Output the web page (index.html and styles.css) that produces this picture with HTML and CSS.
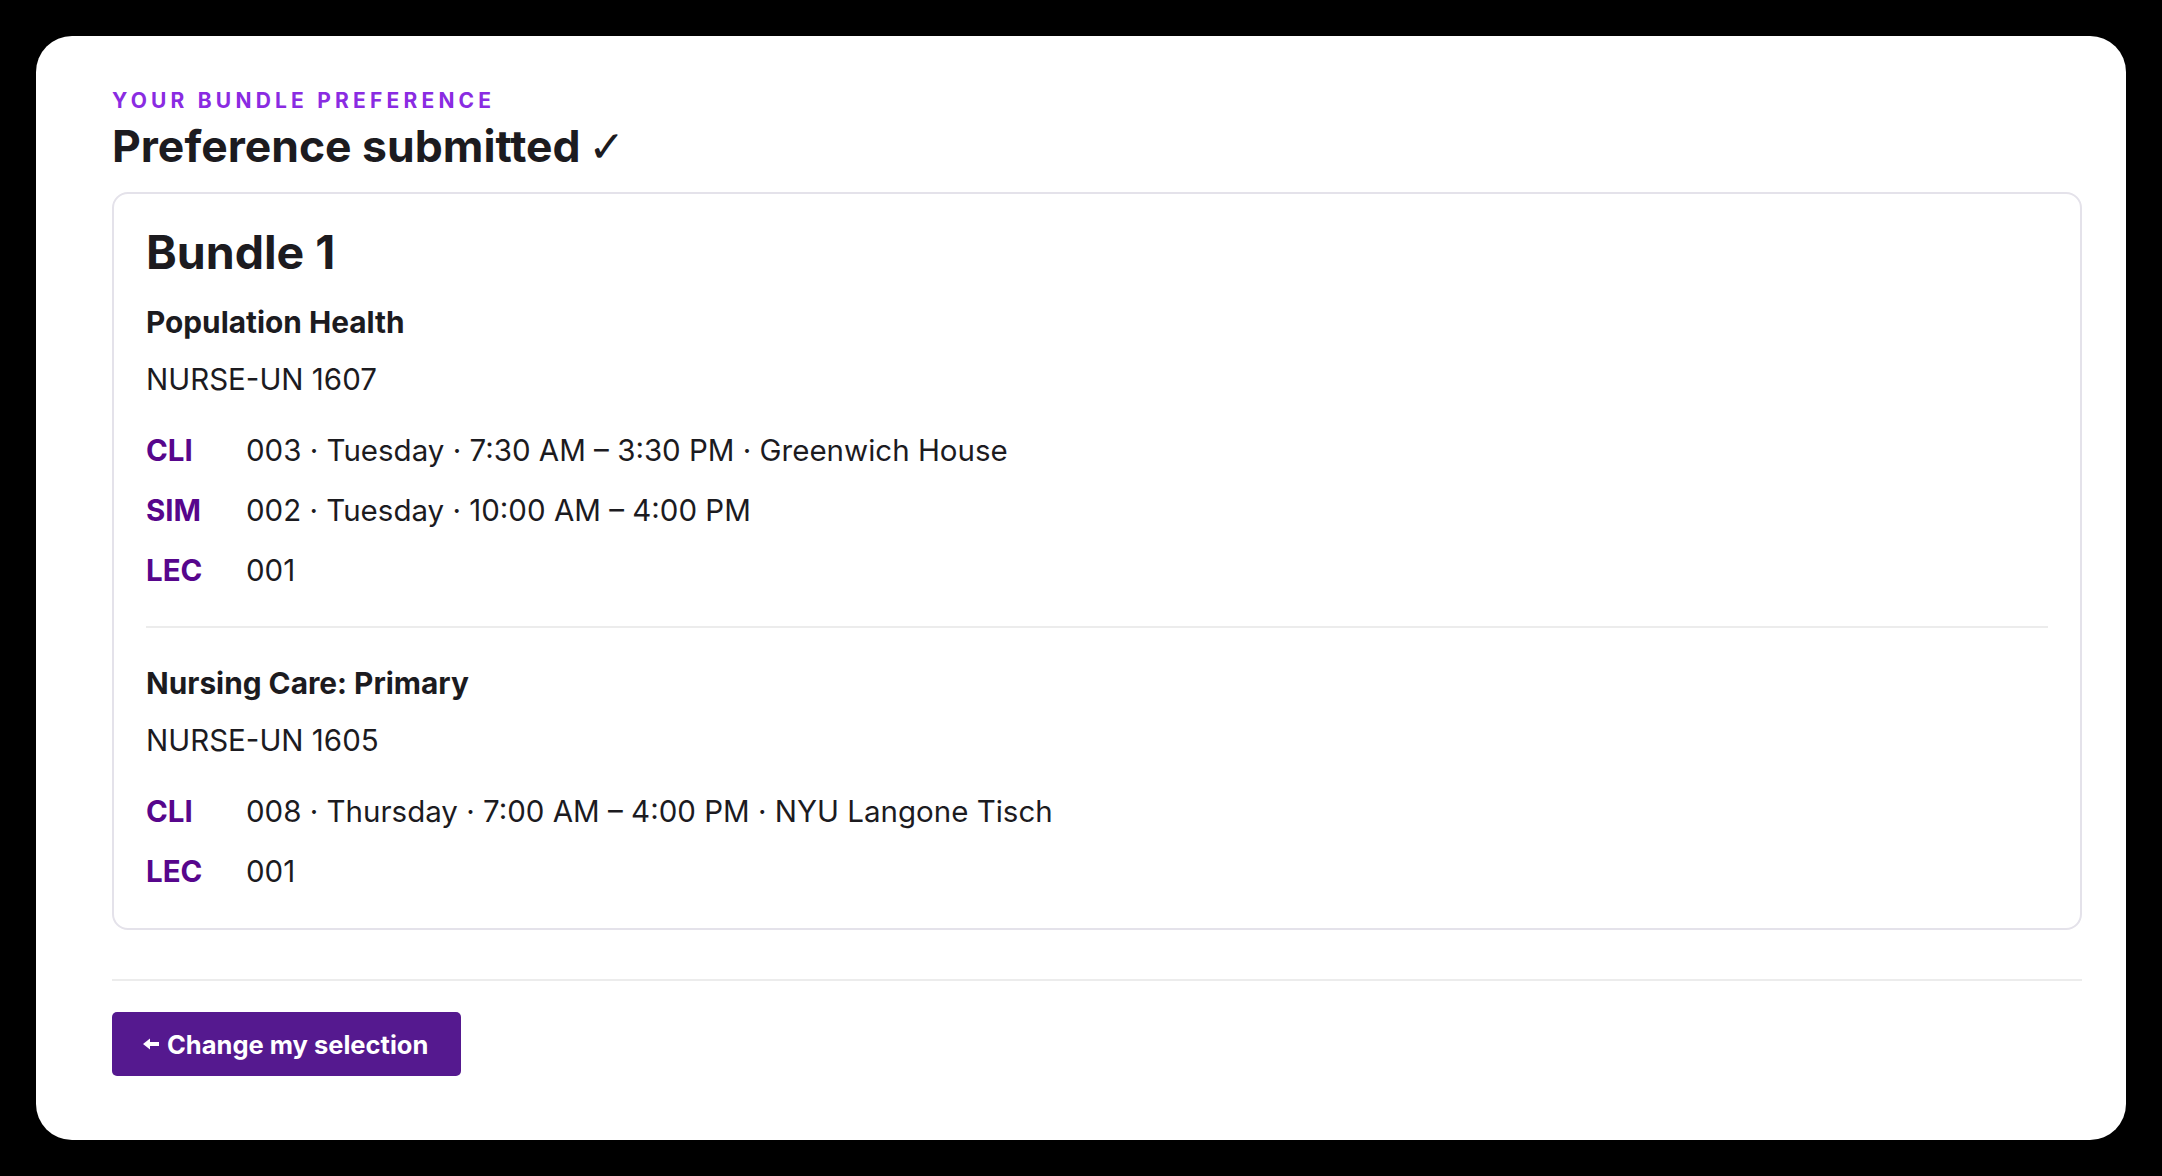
FILE: index.html
```html
<!DOCTYPE html>
<html lang="en">
<head>
<meta charset="utf-8">
<title>Your bundle preference</title>
<link rel="stylesheet" href="styles.css">
</head>
<body>
<main class="panel">
  <header class="head">
    <p class="eyebrow">YOUR BUNDLE PREFERENCE</p>
    <h1 class="title">Preference submitted <span class="check">✓</span></h1>
  </header>

  <section class="card">
    <h2 class="bundle">Bundle 1</h2>

    <div class="course">
      <h3 class="course-name">Population Health</h3>
      <p class="course-code">NURSE-UN 1607</p>
      <dl class="rows">
        <dt class="label">CLI</dt><dd class="value">003 · Tuesday · 7:30 AM – 3:30 PM · Greenwich House</dd>
        <dt class="label">SIM</dt><dd class="value">002 · Tuesday · 10:00 AM – 4:00 PM</dd>
        <dt class="label">LEC</dt><dd class="value">001</dd>
      </dl>
    </div>

    <div class="course">
      <h3 class="course-name">Nursing Care: Primary</h3>
      <p class="course-code">NURSE-UN 1605</p>
      <dl class="rows">
        <dt class="label">CLI</dt><dd class="value">008 · Thursday · 7:00 AM – 4:00 PM · NYU Langone Tisch</dd>
        <dt class="label">LEC</dt><dd class="value">001</dd>
      </dl>
    </div>
  </section>

  <footer class="actions">
    <button class="btn" type="button">
      <svg class="arrow" width="16" height="12" viewBox="0 0 16 12" aria-hidden="true"><path d="M0 6 L7 0.5 L7 4 L16 4 L16 8 L7 8 L7 11.5 Z" fill="#fff"/></svg>
      <span>Change my selection</span>
    </button>
  </footer>
</main>
</body>
</html>
```
FILE: styles.css
```css
* { box-sizing: border-box; }

html, body {
  margin: 0;
  padding: 0;
  background: #000;
}

body {
  padding: 36px;
  font-family: "Inter", "Noto Sans", "DejaVu Sans", sans-serif;
  color: #1c1b1f;
}

.panel {
  background: #fff;
  border-radius: 36px;
  height: 1104px;
  padding: 53px 44px 0 76px;
  display: flex;
  flex-direction: column;
}

.eyebrow {
  margin: 0;
  font-size: 21px;
  line-height: 24px;
  font-weight: 700;
  letter-spacing: 0.2em;
  color: #8a2be2;
}

.title {
  margin: 6px 0 0;
  font-size: 44.5px;
  line-height: 55px;
  font-weight: 700;
  color: #1c1b1f;
}

.check {
  font-family: "DejaVu Sans", sans-serif;
  font-weight: 400;
  font-size: 44px;
  margin-left: -3px;
}

.card {
  margin-top: 18px;
  border: 2px solid #e4e2ea;
  border-radius: 16px;
  padding: 31px 32px 37px;
}

.bundle {
  margin: 0;
  font-size: 46.5px;
  line-height: 55px;
  font-weight: 700;
}

.course {
  margin-top: 22px;
}

.course + .course {
  margin-top: 36px;
  border-top: 2px solid #ececec;
  padding-top: 35px;
}

.course-name {
  margin: 0;
  font-size: 29.8px;
  line-height: 40px;
  font-weight: 700;
}

.course-code {
  margin: 17px 0 0;
  font-size: 29.5px;
  line-height: 40px;
}

.rows {
  margin: 31px 0 0;
  display: grid;
  grid-template-columns: 100px 1fr;
  row-gap: 20px;
  font-size: 29.5px;
  line-height: 40px;
}

.label {
  font-weight: 700;
  color: #57068c;
}

.value {
  margin: 0;
}

.actions {
  margin-top: 49px;
  border-top: 2px solid #ececec;
  padding-top: 31px;
}

.btn {
  display: inline-flex;
  align-items: center;
  gap: 8px;
  height: 64px;
  padding: 0 33px 0 31px;
  border: 0;
  border-radius: 5px;
  background: #55198f;
  color: #fff;
  font-family: inherit;
  font-size: 25.5px;
  font-weight: 700;
}

.arrow {
  flex: none;
}
```
